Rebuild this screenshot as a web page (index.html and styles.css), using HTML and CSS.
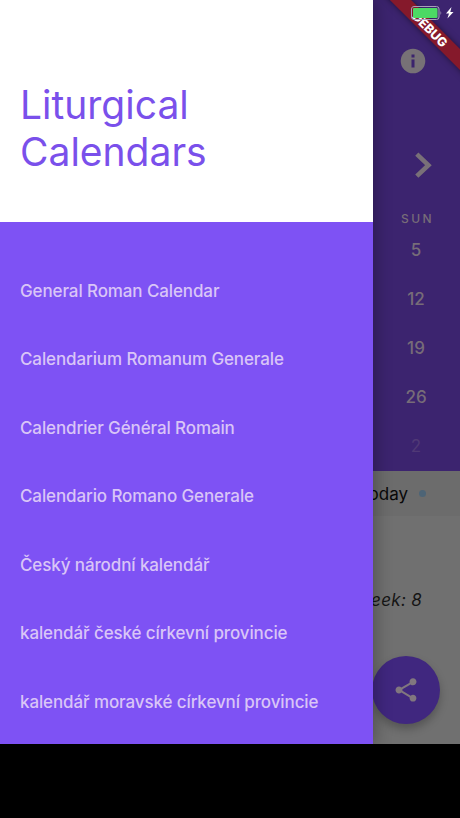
FILE: index.html
```html
<!DOCTYPE html>
<html lang="en">
<head>
  <meta charset="UTF-8">
  <meta name="viewport" content="width=device-width, initial-scale=1.0">
  <link rel="stylesheet" href="styles.css">
  <title>Liturgical Calendars</title>
</head>
<body>
  <div class="app">
    <main class="page">
      <section class="calendar">
        <div class="toolbar">
          <svg class="info-icon" viewBox="0 0 26 26">
            <circle cx="13" cy="13" r="12.3" fill="#777176"/>
            <path d="M11.5 6.4h3v3h-3zM11.5 11.5h3v7.9h-3z" fill="#3b236d"/>
          </svg>
        </div>
        <div class="month-nav">
          <svg class="chevron" viewBox="0 0 18 28">
            <path d="M1.8 3.2L13.4 14.2L1.8 25.2" fill="none" stroke="#797078" stroke-width="4.6"/>
          </svg>
        </div>
        <div class="weekday">SUN</div>
        <div class="days">
          <span>5</span>
          <span>12</span>
          <span>19</span>
          <span>26</span>
          <span class="outside">2</span>
        </div>
      </section>
      <section class="today-bar">
        <span>Today</span>
        <i class="dot"></i>
      </section>
      <section class="details">
        <p class="week">Week: 8</p>
      </section>
      <button class="fab" aria-label="Share">
        <svg viewBox="0 0 24 24" width="28" height="28">
          <path d="M18 16.08c-.76 0-1.44.3-1.96.77L8.91 12.7c.05-.23.09-.46.09-.7s-.04-.47-.09-.7l7.05-4.11c.54.5 1.25.81 2.04.81 1.66 0 3-1.34 3-3s-1.34-3-3-3-3 1.34-3 3c0 .24.04.47.09.7L8.04 9.81C7.5 9.31 6.79 9 6 9c-1.66 0-3 1.34-3 3s1.34 3 3 3c.79 0 1.5-.31 2.04-.81l7.12 4.16c-.05.21-.08.43-.08.65 0 1.61 1.31 2.92 2.92 2.92s2.92-1.31 2.92-2.92-1.31-2.92-2.92-2.92z" fill="#81777f"/>
        </svg>
      </button>
    </main>
    <nav class="drawer">
      <header class="drawer-header">
        <h1>Liturgical<br>Calendars</h1>
      </header>
      <ul class="calendar-list">
        <li>General Roman Calendar</li>
        <li>Calendarium Romanum Generale</li>
        <li>Calendrier Général Romain</li>
        <li>Calendario Romano Generale</li>
        <li>Český národní kalendář</li>
        <li>kalendář české církevní provincie</li>
        <li>kalendář moravské církevní provincie</li>
      </ul>
    </nav>
    <div class="debug">DEBUG</div>
    <svg class="status" viewBox="0 0 50 18">
      <rect x="2.5" y="2.5" width="27.5" height="13" rx="2.5" fill="none" stroke="#a99fbb"/>
      <rect x="4" y="4" width="24.5" height="10" rx="1" fill="#4cd964"/>
      <path d="M31.5 6.7q1.7 2.3 0 4.6z" fill="#a99fbb"/>
      <path d="M42.5 3L37 9.5h3l-1.6 5L44.5 8h-3.2z" fill="#fff"/>
    </svg>
  </div>
</body>
</html>
```

FILE: styles.css
```css
body {
  margin: 0;
  background-color: #000;
  font-family: Inter, "Liberation Sans", sans-serif;
}

.app {
  position: relative;
  width: 460px;
  height: 744px;
  overflow: hidden;
}

.page {
  height: 100%;
  background-color: #707070;
}

.calendar {
  display: flex;
  flex-direction: column;
  align-items: flex-end;
  box-sizing: border-box;
  height: 471px;
  padding-top: 48px;
  background-color: #3c246f;
  color: #776c78;
}

.toolbar {
  height: 103px;
  padding-right: 34px;
}

.info-icon {
  display: block;
  width: 26px;
  height: 26px;
}

.month-nav {
  height: 61px;
  padding-right: 27px;
}

.chevron {
  display: block;
  width: 18px;
  height: 28px;
}

.weekday {
  width: 88px;
  height: 14px;
  font-size: 12px;
  font-weight: 500;
  line-height: 14px;
  letter-spacing: 2.5px;
  text-indent: 3px;
  text-align: center;
}

.days {
  display: flex;
  flex-direction: column;
  width: 88px;
}

.days span {
  height: 49px;
  font-size: 17px;
  font-weight: 500;
  line-height: 49px;
  text-align: center;
}

.days .outside {
  color: #503976;
  font-weight: 400;
}

.today-bar {
  display: flex;
  align-items: center;
  justify-content: flex-end;
  gap: 11px;
  box-sizing: border-box;
  height: 45px;
  padding-right: 34px;
  background-color: #6c6c6c;
  color: #080808;
  font-size: 17px;
}

.dot {
  width: 7px;
  height: 7px;
  border-radius: 50%;
  background-color: #4d6476;
}

.details {
  padding: 73px 38px 0 0;
  text-align: right;
}

.week {
  margin: 0;
  color: #151515;
  font-size: 17px;
  font-style: italic;
  line-height: 22px;
  letter-spacing: 0.3px;
}

.fab {
  position: absolute;
  right: 20px;
  bottom: 20px;
  display: flex;
  align-items: center;
  justify-content: center;
  width: 68px;
  height: 68px;
  padding: 0;
  border: none;
  border-radius: 50%;
  background-color: #40277f;
  box-shadow: 0 5px 9px rgba(0, 0, 0, 0.25);
}

.drawer {
  position: absolute;
  top: 0;
  left: 0;
  width: 373px;
  height: 100%;
  background-color: #7e52f4;
  box-shadow: 2px 0 16px rgba(0, 0, 0, 0.3);
}

.drawer-header {
  box-sizing: border-box;
  height: 222px;
  padding: 82px 20px 0;
  background-color: #fff;
}

.drawer-header h1 {
  margin: 0;
  color: #7a50eb;
  font-size: 39px;
  font-weight: 400;
  line-height: 46.5px;
}

.calendar-list {
  margin: 0;
  padding: 34.5px 20px 0;
  list-style: none;
}

.calendar-list li {
  height: 68.6px;
  color: #d9c5f7;
  font-size: 17px;
  font-weight: 500;
  line-height: 68.6px;
  letter-spacing: -0.11px;
  white-space: nowrap;
}

/* corner ribbon */
.debug {
  position: absolute;
  top: 22px;
  left: 365px;
  width: 130px;
  height: 15px;
  background-color: #85192b;
  box-shadow: 0 0 6px rgba(0, 0, 0, 0.5);
  color: #fff;
  font-size: 12.5px;
  font-weight: 800;
  line-height: 15px;
  text-align: center;
  transform: rotate(45deg);
}

.status {
  position: absolute;
  top: 4px;
  left: 409px;
  width: 50px;
  height: 18px;
}
```
